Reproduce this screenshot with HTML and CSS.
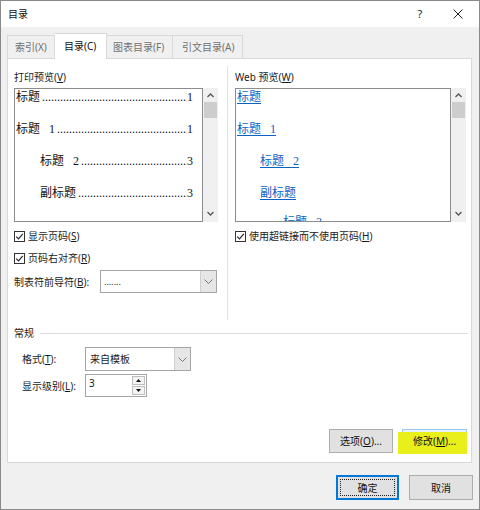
FILE: index.html
```html
<!DOCTYPE html>
<html lang="zh-CN">
<head>
<meta charset="utf-8">
<title>目录</title>
<link rel="stylesheet" href="styles.css">
</head>
<body>
<div class="window">
  <div class="titlebar">
    <span class="title">目录</span>
    <span class="help">?</span>
    <span class="close"><svg width="10" height="10" viewBox="0 0 10 10"><path d="M0.5 0.5L9.5 9.5M9.5 0.5L0.5 9.5" stroke="#222" stroke-width="1" fill="none"/></svg></span>
  </div>

  <div class="tabstrip">
    <div class="tab t1">索引(X)</div>
    <div class="tab active t2">目录(C)</div>
    <div class="tab t3">图表目录(F)</div>
    <div class="tab t4">引文目录(A)</div>
  </div>

  <div class="panel">
    <div class="top">
      <div class="col left">
        <div class="label">打印预览(<u>V</u>)</div>
        <div class="listbox">
          <div class="list print">
            <div class="row"><span class="t">标题</span><span class="dots"></span><span class="n">1</span></div>
            <div class="row"><span class="t">标题&nbsp;&nbsp;&nbsp;1</span><span class="dots"></span><span class="n">1</span></div>
            <div class="row l2"><span class="t">标题&nbsp;&nbsp;&nbsp;2</span><span class="dots"></span><span class="n">3</span></div>
            <div class="row l2"><span class="t">副标题</span><span class="dots"></span><span class="n">3</span></div>
            <div class="row l3 last"><span class="t">标题&nbsp;&nbsp;&nbsp;3</span><span class="dots"></span><span class="n">5</span></div>
          </div>
          <div class="sb">
            <svg class="arr" width="7" height="5" viewBox="0 0 7 5"><path d="M0.5 4L3.5 1L6.5 4" stroke="#555" stroke-width="1.3" fill="none"/></svg>
            <div class="thumb"></div>
            <div class="sb-space"></div>
            <svg class="arr" width="7" height="5" viewBox="0 0 7 5"><path d="M0.5 1L3.5 4L6.5 1" stroke="#555" stroke-width="1.3" fill="none"/></svg>
          </div>
        </div>
        <div class="chk first">
          <svg class="box" width="11" height="11" viewBox="0 0 11 11"><rect x="0.5" y="0.5" width="10" height="10" fill="#fff" stroke="#333"/><path d="M2.2 5.6L4.5 7.9L8.8 2.8" fill="none" stroke="#222" stroke-width="1.1"/></svg>
          <span>显示页码(<u>S</u>)</span>
        </div>
        <div class="chk second">
          <svg class="box" width="11" height="11" viewBox="0 0 11 11"><rect x="0.5" y="0.5" width="10" height="10" fill="#fff" stroke="#333"/><path d="M2.2 5.6L4.5 7.9L8.8 2.8" fill="none" stroke="#222" stroke-width="1.1"/></svg>
          <span>页码右对齐(<u>R</u>)</span>
        </div>
        <div class="leader">
          <span class="leader-label">制表符前导符(<u>B</u>):</span>
          <div class="select lead-select">
            <span class="val dotsval">.......</span>
            <span class="drop"><svg width="9" height="5" viewBox="0 0 9 5"><path d="M0.5 0.5L4.5 4.5L8.5 0.5" stroke="#777" stroke-width="1" fill="none"/></svg></span>
          </div>
        </div>
      </div>

      <div class="vsep"></div>

      <div class="col right">
        <div class="label">Web 预览(<u>W</u>)</div>
        <div class="listbox">
          <div class="list web">
            <div class="row"><a class="lnk">标题</a></div>
            <div class="row"><a class="lnk">标题&nbsp;&nbsp;&nbsp;1</a></div>
            <div class="row l2"><a class="lnk">标题&nbsp;&nbsp;&nbsp;2</a></div>
            <div class="row l2"><a class="lnk">副标题</a></div>
            <div class="row l3 last"><a class="lnk">标题&nbsp;&nbsp;&nbsp;3</a></div>
          </div>
          <div class="sb">
            <svg class="arr" width="7" height="5" viewBox="0 0 7 5"><path d="M0.5 4L3.5 1L6.5 4" stroke="#555" stroke-width="1.3" fill="none"/></svg>
            <div class="thumb"></div>
            <div class="sb-space"></div>
            <svg class="arr" width="7" height="5" viewBox="0 0 7 5"><path d="M0.5 1L3.5 4L6.5 1" stroke="#555" stroke-width="1.3" fill="none"/></svg>
          </div>
        </div>
        <div class="chk first">
          <svg class="box" width="11" height="11" viewBox="0 0 11 11"><rect x="0.5" y="0.5" width="10" height="10" fill="#fff" stroke="#333"/><path d="M2.2 5.6L4.5 7.9L8.8 2.8" fill="none" stroke="#222" stroke-width="1.1"/></svg>
          <span>使用超链接而不使用页码(<u>H</u>)</span>
        </div>
      </div>
    </div>

    <div class="group">
      <div class="group-head"><span>常规</span><div class="hline"></div></div>
      <div class="frow">
        <span class="flabel">格式(<u>T</u>):</span>
        <div class="select fmt-select">
          <span class="val">来自模板</span>
          <span class="drop"><svg width="9" height="5" viewBox="0 0 9 5"><path d="M0.5 0.5L4.5 4.5L8.5 0.5" stroke="#777" stroke-width="1" fill="none"/></svg></span>
        </div>
      </div>
      <div class="frow second">
        <span class="flabel">显示级别(<u>L</u>):</span>
        <div class="spinner">
          <span class="val">3</span>
          <span class="spins">
            <span class="spin"><svg width="5" height="3" viewBox="0 0 5 3"><path d="M0 3L2.5 0L5 3Z" fill="#111"/></svg></span>
            <span class="spin"><svg width="5" height="3" viewBox="0 0 5 3"><path d="M0 0L2.5 3L5 0Z" fill="#111"/></svg></span>
          </span>
        </div>
      </div>
    </div>

    <div class="panel-buttons">
      <div class="btn opt">选项(<u>O</u>)...</div>
      <div class="btn mod"><span class="hl"></span><span class="btxt">修改(<u>M</u>)...</span></div>
    </div>
  </div>

  <div class="footer">
    <div class="btn ok"><span class="btxt">确定</span></div>
    <div class="btn cancel">取消</div>
  </div>
</div>
</body>
</html>
```

FILE: styles.css
```css
html, body {
  margin: 0;
  padding: 0;
  background: #ffffff;
}

.window {
  width: 480px;
  height: 510px;
  box-sizing: border-box;
  border: 1px solid #8a8a8a;
  background: #f0f0f0;
  display: flex;
  flex-direction: column;
  font-family: "Noto Sans", "Noto Sans CJK SC", sans-serif;
  font-size: 10px;
  line-height: 14px;
  color: #1a1a1a;
}

u {
  text-decoration: underline;
  text-underline-offset: 1px;
}

/* title bar */
.titlebar {
  height: 26px;
  background: #ffffff;
  display: flex;
  align-items: center;
  padding-left: 7px;
  padding-right: 11px;
  padding-bottom: 1px;
  box-sizing: border-box;
  flex: none;
}
.title {
  font-size: 10px;
  color: #111;
}
.help {
  margin-left: auto;
  width: 20px;
  text-align: center;
  font-size: 11px;
  color: #222;
}
.close {
  width: 20px;
  margin-left: 18px;
  display: flex;
  justify-content: center;
}

/* tabs */
.tabstrip {
  height: 31px;
  flex: none;
  display: flex;
  align-items: flex-end;
  padding-left: 6px;
  box-sizing: border-box;
}
.tab {
  height: 23px;
  box-sizing: border-box;
  border-top: 1px solid #d9d9d9;
  border-right: 1px solid #d9d9d9;
  background: #f0f0f0;
  color: #707070;
  line-height: 22px;
  white-space: nowrap;
}
.t1 {
  width: 48px;
  border-left: 1px solid #d9d9d9;
  padding-left: 7px;
}
.t2 {
  width: 52px;
  padding-left: 9px;
}
.t3 {
  width: 66px;
  padding-left: 6px;
}
.t4 {
  width: 70px;
  padding-left: 9px;
}
.tab.active {
  height: 26px;
  margin-bottom: -1px;
  background: #ffffff;
  color: #111;
  line-height: 24px;
  position: relative;
  z-index: 1;
}

/* panel */
.panel {
  margin-left: 6px;
  width: 465px;
  height: 405px;
  flex: none;
  box-sizing: border-box;
  border: 1px solid #d9d9d9;
  background: #ffffff;
  display: flex;
  flex-direction: column;
}

.top {
  display: flex;
  margin-top: 7px;
  height: 254px;
  padding-left: 6px;
  flex: none;
}
.col.left { width: 204px; }
.col.right { width: 231px; }
.vsep {
  width: 1px;
  background: #e0e0e0;
  margin-left: 9px;
  margin-right: 7px;
}

.label {
  padding-top: 4px;
  height: 14px;
}

.listbox {
  margin-top: 4px;
  height: 134px;
  display: flex;
}
.list {
  flex: 1;
  box-sizing: border-box;
  border: 1px solid #8c8c8c;
  overflow: hidden;
  background: #fff;
}
.sb {
  width: 15px;
  background: #f0f0f0;
  display: flex;
  flex-direction: column;
  align-items: center;
  padding-top: 5px;
  padding-bottom: 6px;
  box-sizing: border-box;
}
.sb .arr { flex: none; }
.thumb {
  width: 13px;
  height: 16px;
  background: #cdcdcd;
  margin-top: 4px;
}
.sb-space { flex: 1; }

.row {
  height: 32px;
  line-height: 16px;
  display: flex;
  white-space: nowrap;
  font-family: "Liberation Serif", "Noto Sans CJK SC", serif;
  font-size: 12px;
  color: #111;
}
.print .row {
  padding-left: 1px;
  padding-right: 9px;
}
.dots {
  flex: 1;
  overflow: hidden;
  white-space: nowrap;
  min-width: 0;
  margin-left: 2px;
}
.dots::before {
  content: "................................................................................................................";
}
.n { flex: none; }
.print .row.l2 { padding-left: 25px; }
.print .row.l3 { padding-left: 49px; }
.print .row.last { margin-top: 3px; }

.web .row { padding-left: 1px; }
.web .row.l2 { padding-left: 24px; }
.web .row.l3 { padding-left: 47px; }
.web .row.last { margin-top: -3px; }
.lnk {
  color: #0b62c4;
  text-decoration: underline;
  text-underline-offset: 2px;
}

/* checkboxes */
.chk {
  display: flex;
  align-items: center;
  height: 14px;
}
.chk.first { margin-top: 7px; }
.chk.second { margin-top: 8px; }
.chk .box {
  flex: none;
  margin-right: 3px;
}

.leader {
  margin-top: 5px;
  display: flex;
  align-items: center;
}
.leader-label { width: 86px; }

.select {
  display: flex;
  box-sizing: border-box;
  border: 1px solid #a5a5a5;
  background: #fff;
}
.select .val {
  flex: 1;
  padding-left: 3px;
  display: flex;
  align-items: center;
}
.lead-select {
  width: 117px;
  height: 23px;
}
.dotsval {
  font-size: 9px;
  letter-spacing: 0;
  padding-top: 1px;
}
.drop {
  width: 15px;
  background: #e6e6e6;
  border-left: 1px solid #cfcfcf;
  display: flex;
  align-items: center;
  justify-content: center;
}

/* general group */
.group {
  margin-top: 6px;
  flex: none;
}
.group-head {
  display: flex;
  align-items: center;
  padding-left: 6px;
  padding-right: 3px;
  height: 14px;
}
.hline {
  flex: 1;
  height: 1px;
  background: #dcdcdc;
  margin-left: 6px;
}
.frow {
  margin-top: 7px;
  display: flex;
  align-items: center;
  padding-left: 14px;
}
.frow.second { margin-top: 3px; }
.flabel { width: 63px; }
.fmt-select {
  width: 106px;
  height: 24px;
}
.fmt-select .val { padding-left: 4px; }

.spinner {
  width: 62px;
  height: 23px;
  box-sizing: border-box;
  border: 1px solid #a5a5a5;
  display: flex;
  background: #fff;
}
.spinner .val {
  flex: 1;
  padding-left: 3px;
  padding-top: 1px;
}
.spins {
  width: 13px;
  display: flex;
  flex-direction: column;
  padding: 1px 1px 1px 0;
  gap: 1px;
}
.spin {
  flex: 1;
  border: 1px solid #bdbdbd;
  background: #f3f3f3;
  display: flex;
  align-items: center;
  justify-content: center;
}

/* buttons */
.panel-buttons {
  margin-top: auto;
  margin-bottom: 9px;
  display: flex;
  justify-content: flex-end;
  gap: 9px;
  padding-right: 4px;
}
.btn {
  box-sizing: border-box;
  height: 24px;
  border: 1px solid #adadad;
  background: #e1e1e1;
  display: flex;
  align-items: center;
  justify-content: center;
  color: #111;
  position: relative;
}
.btn.opt { width: 64px; }
.btn.mod {
  width: 65px;
  border-color: #9cc7ef;
  background: #e5f1fb;
}
.hl {
  position: absolute;
  left: -5px;
  top: 2px;
  right: -1px;
  bottom: -2px;
  background: #e8ef1b;
}
.btxt {
  position: relative;
  z-index: 1;
}

.footer {
  margin-top: 12px;
  display: flex;
  justify-content: flex-end;
  gap: 10px;
  padding-right: 6px;
}
.footer .btn {
  height: 25px;
}
.btn.ok {
  width: 63px;
  border-color: #0078d7;
  box-shadow: inset 0 0 0 1px #0078d7;
}
.btn.ok::after {
  content: "";
  position: absolute;
  left: 3px;
  top: 3px;
  right: 3px;
  bottom: 3px;
  border: 1px dotted #222;
}
.btn.cancel { width: 64px; }
```
